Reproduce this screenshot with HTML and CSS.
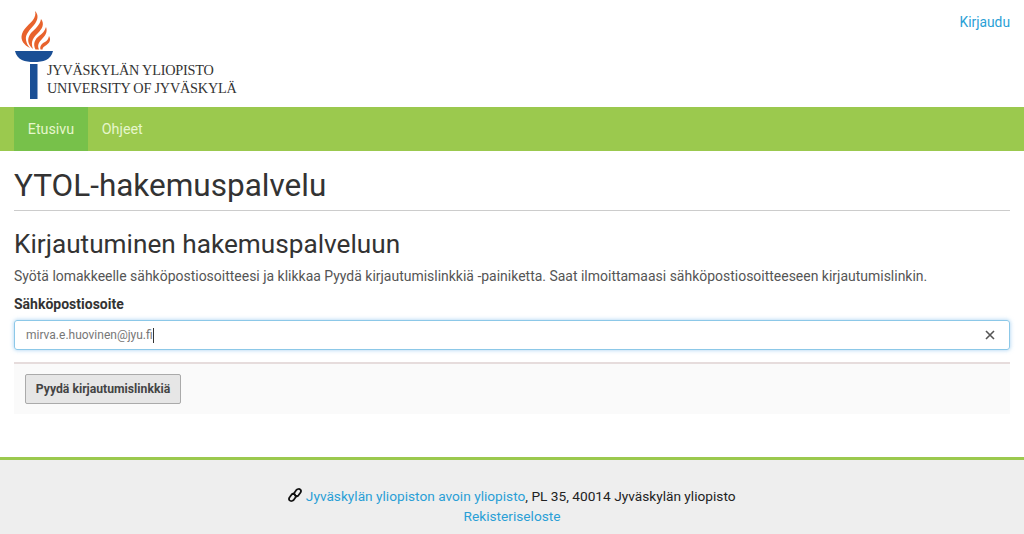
FILE: index.html
```html
<!DOCTYPE html>
<html lang="fi">
<head>
<meta charset="utf-8">
<title>YTOL-hakemuspalvelu</title>
<link rel="stylesheet" href="styles.css">
</head>
<body>
<header class="top">
  <div class="logo">
    <svg class="torch" viewBox="0 0 40 90" width="40" height="90" aria-hidden="true">
      <g fill="#e8622c">
        <path d="M21 1 C25 5 24 10 20 15 C16 20 11 24 12 30 C12.500 33 14 36 16 38 C10 35 6 30 8 24 C10 18 16 14 19 10 C21 7 22 4 21 1Z"/>
        <path d="M27 9 C31 14 28 19 24 23 C20 27 16 31 19 39 C13 34 13 28 17 23 C21 19 26 15 27 9Z"/>
        <path d="M32 17 C34 22 31 26 28 29 C25 32 23 35 25 39.500 L21.500 39.500 C18.500 34 21 29 25 26 C28 24 31 21 32 17Z"/>
        <path d="M35 26 C38 31 34 34 31 36 C29.500 37 28.500 38 28.500 39.500 L26.500 39.500 C25.500 36 28 33.500 31 32 C33 31 34.500 29 35 26Z"/>
      </g>
      <path fill="#1a4f95" d="M1 41 H39 C37 50 29 52 20 52 C11 52 3 50 1 41Z"/>
      <rect fill="#1a4f95" x="16" y="54" width="7.500" height="35"/>
    </svg>
    <div class="logo-text">
      <div>JYVÄSKYLÄN YLIOPISTO</div>
      <div>UNIVERSITY OF JYVÄSKYLÄ</div>
    </div>
  </div>
  <a class="link login" href="#">Kirjaudu</a>
</header>
<nav class="nav">
  <a class="nav-item active" href="#">Etusivu</a>
  <a class="nav-item" href="#">Ohjeet</a>
</nav>
<main class="content">
  <h1 class="title">YTOL-hakemuspalvelu</h1>
  <h2 class="subtitle">Kirjautuminen hakemuspalveluun</h2>
  <p class="intro">Syötä lomakkeelle sähköpostiosoitteesi ja klikkaa Pyydä kirjautumislinkkiä -painiketta. Saat ilmoittamaasi sähköpostiosoitteeseen kirjautumislinkin.</p>
  <label class="label" for="email">Sähköpostiosoite</label>
  <div class="input">
    <span id="email" class="value">mirva.e.huovinen@jyu.fi</span><span class="caret"></span>
    <svg class="clear" viewBox="0 0 10 10" width="10" height="10" aria-hidden="true"><path d="M1 1 L9 9 M9 1 L1 9" stroke="#555" stroke-width="1.600" fill="none"/></svg>
  </div>
  <div class="actions"><button class="button" type="button">Pyydä kirjautumislinkkiä</button></div>
</main>
<footer class="footer">
  <div class="footer-line">
    <svg class="chain" viewBox="0 0 14 14" width="14" height="14" aria-hidden="true">
      <g fill="none" stroke="#111" stroke-width="1.800" stroke-linecap="round">
        <path d="M5.500 6 L8.500 1.800 C9.500 0.800 11.500 0.800 12.400 1.600 C13.200 2.500 13 4 12.200 5 L10.500 7.300 C9.500 8.400 8 8.300 7 7.500"/>
        <path d="M8.500 8 L5.500 12.200 C4.500 13.200 2.500 13.200 1.600 12.400 C0.800 11.500 1 10 1.800 9 L3.500 6.700 C4.500 5.600 6 5.700 7 6.500"/>
      </g>
    </svg>
    <a class="link" href="#">Jyväskylän yliopiston avoin yliopisto</a>, PL 35, 40014 Jyväskylän yliopisto
  </div>
  <div class="footer-line"><a class="link" href="#">Rekisteriseloste</a></div>
</footer>
</body>
</html>
```

FILE: styles.css
```css
* { box-sizing: border-box; }
html, body { margin: 0; padding: 0; }
body {
  font-family: Roboto, "Liberation Sans", sans-serif;
  color: #333;
  background: #fff;
  font-size: 14px;
  height: 534px;
  overflow: hidden;
}
.link { color: #2a9fd6; text-decoration: none; }
.top {
  height: 107px;
  padding: 10px 14px 0 14px;
  display: flex;
  justify-content: space-between;
  align-items: flex-start;
}
.logo { display: flex; align-items: flex-start; }
.torch { display: block; flex: none; }
.logo-text {
  margin: 51px 0 0 -7px;
  font-family: "Liberation Serif", serif;
  font-size: 14.250px;
  line-height: 18px;
  color: #333;
  white-space: nowrap;
  letter-spacing: -0.2px;
}
.login { font-size: 13.800px; line-height: 24px; }
.nav {
  height: 44px;
  background: #9bc94e;
  padding-left: 14px;
  display: flex;
}
.nav-item {
  display: flex;
  align-items: center;
  padding: 0 13.800px;
  color: #e6f6cc;
  text-decoration: none;
  font-size: 14.300px;
}
.active { background: #77c14a; }
.content { padding: 0 14px; }
.title {
  margin: 15px 0 0;
  padding-bottom: 5px;
  height: 45px;
  font-size: 31.500px;
  line-height: 39px;
  font-weight: 400;
  color: #333;
  border-bottom: 1px solid #ccc;
}
.subtitle {
  margin: 18px 0 0;
  font-size: 26.200px;
  line-height: 31px;
  font-weight: 400;
  color: #333;
}
.intro {
  margin: 6px 0 0;
  font-size: 13.970px;
  line-height: 21px;
  color: #555;
}
.label {
  display: block;
  margin-top: 7px;
  font-weight: 700;
  font-size: 14px;
  line-height: 21px;
  color: #333;
}
.input {
  margin-top: 5px;
  height: 30px;
  border: 1px solid #8cc8e8;
  border-radius: 3px;
  box-shadow: 0 0 4px rgba(102, 175, 233, 0.6);
  padding: 0 14px 0 11px;
  display: flex;
  align-items: center;
  font-size: 12px;
  color: #777;
}
.caret { width: 1px; height: 15px; background: #333; }
.clear { margin-left: auto; }
.actions {
  margin-top: 12px;
  height: 52px;
  border-top: 2px solid #e6dcdc;
  background: #fafafa;
  padding: 10px 11px 0;
}
.button {
  height: 30px;
  width: 156px;
  padding: 0;
  font-family: inherit;
  font-size: 12.200px;
  font-weight: 700;
  color: #444;
  background: #e6e6e6;
  border: 1px solid #aaa;
  border-radius: 2px;
}
.footer {
  margin-top: 43px;
  height: 77px;
  background: #eee;
  border-top: 3px solid #9bc94e;
  padding-top: 26px;
  text-align: center;
  font-size: 13.700px;
  line-height: 20px;
  color: #222;
}
.chain { vertical-align: -1px; }
```
